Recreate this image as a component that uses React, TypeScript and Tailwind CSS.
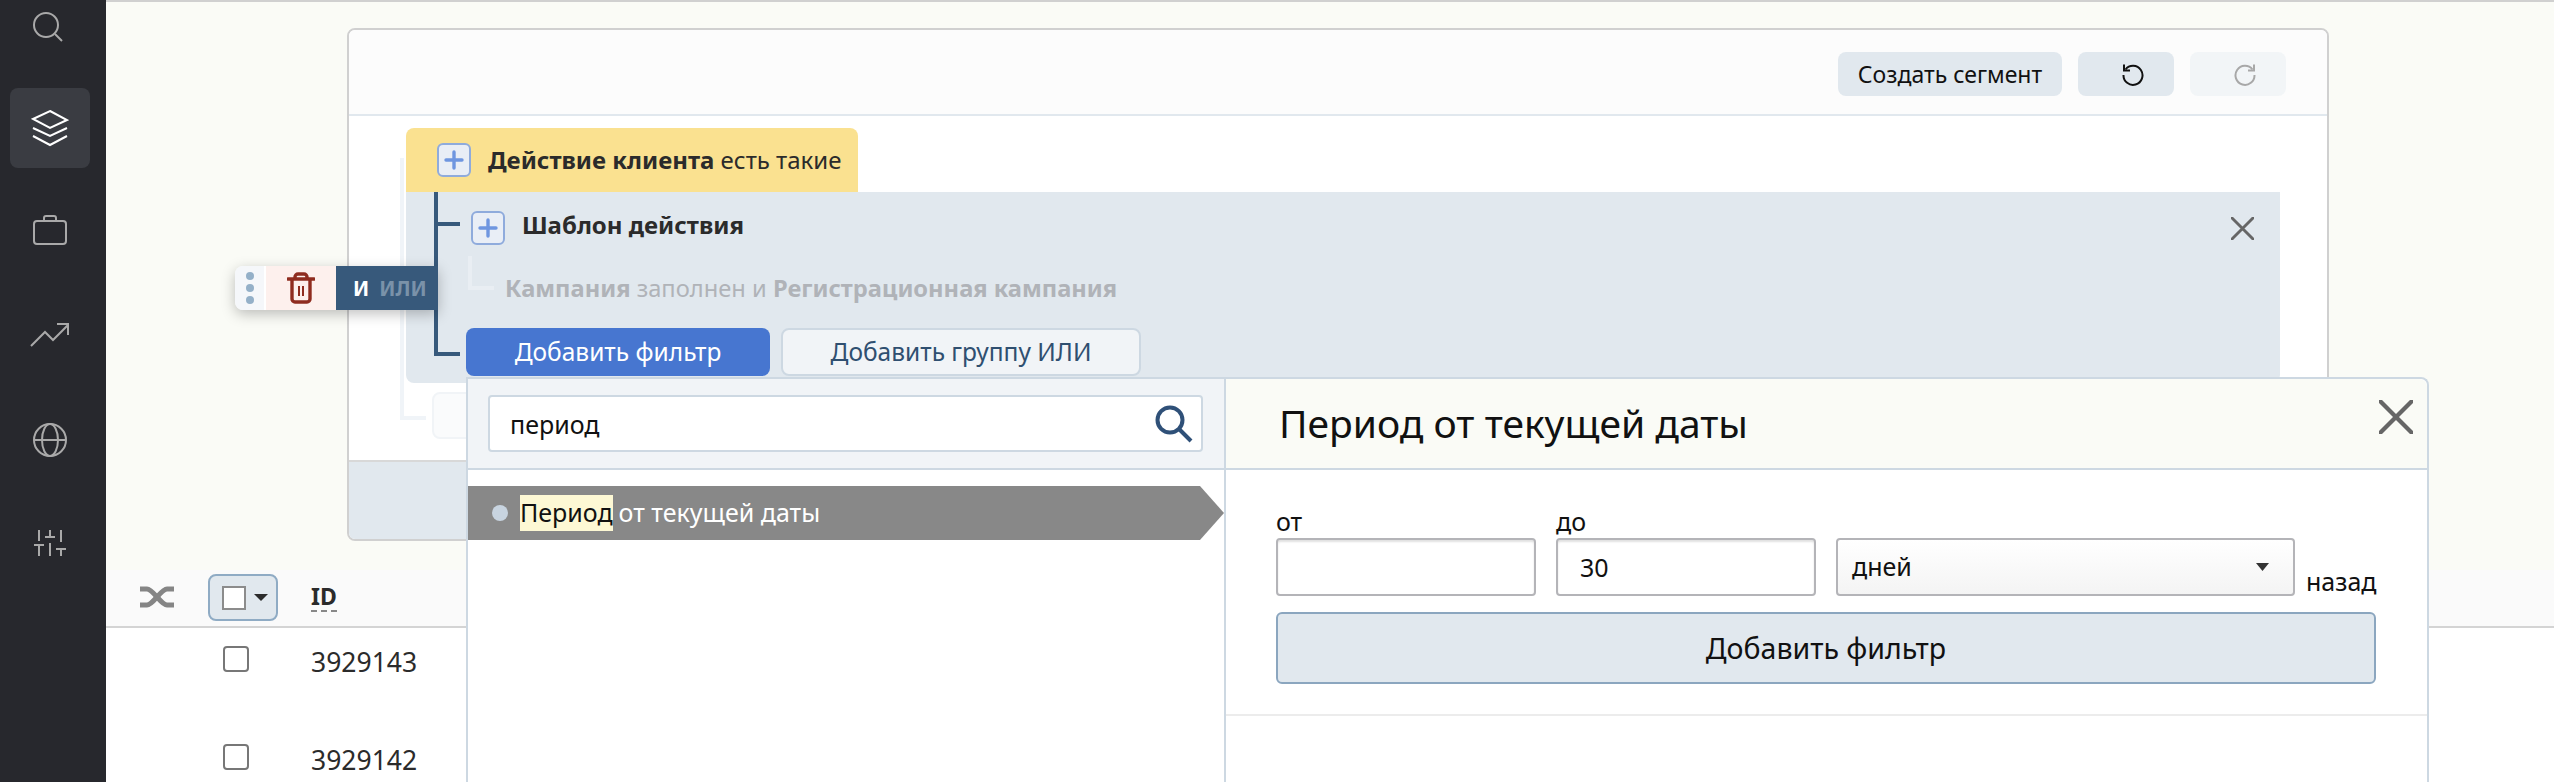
import React from 'react';

const font = { fontFamily: '"Noto Sans", "Open Sans", sans-serif' };

const PlusBox = () => (
  <div className="flex h-[34px] w-[34px] shrink-0 items-center justify-center rounded-[6px] border-2 border-[#8fabdc] bg-[#e9eef6]">
    <svg width="20" height="20" viewBox="0 0 20 20">
      <path d="M10 2v16M2 10h16" stroke="#6f96e0" strokeWidth="3.4" strokeLinecap="round" />
    </svg>
  </div>
);

const CloseIcon = ({ size, color, stroke }: { size: number; color: string; stroke: number }) => (
  <svg width={size} height={size} viewBox="0 0 24 24">
    <path d="M1 1l22 22M23 1L1 23" stroke={color} strokeWidth={stroke} strokeLinecap="round" />
  </svg>
);

// Left navigation rail
const Sidebar = () => (
  <aside className="flex h-full w-[106px] shrink-0 flex-col items-center bg-[#27282d] pr-[6px]">
    <div className="mt-[8px] flex h-[38px] w-[80px] items-center justify-center pr-[4px]">
      <svg width="30" height="30" viewBox="0 0 30 30" fill="none" stroke="#a9a9a9" strokeWidth="2">
        <circle cx="13" cy="13" r="12" />
        <path d="M22 22l7 7" />
      </svg>
    </div>
    <div className="mt-[42px] flex h-[80px] w-[80px] items-center justify-center rounded-[8px] bg-[#3a3c42]">
      <svg width="38" height="38" viewBox="0 0 38 38" fill="none" stroke="#fff" strokeWidth="2">
        <path d="M19 2l17 9-17 8-17-9z" />
        <path d="M2 19l17 8 17-8" />
        <path d="M2 27l17 9 17-9" />
      </svg>
    </div>
    <div className="mt-[46px] flex h-[32px] w-[80px] items-center justify-center">
      <svg width="34" height="30" viewBox="0 0 34 30" fill="none" stroke="#a9a9a9" strokeWidth="2">
        <rect x="1" y="6" width="32" height="23" rx="3" />
        <path d="M11 6V3a2 2 0 0 1 2-2h8a2 2 0 0 1 2 2v3" />
      </svg>
    </div>
    <div className="mt-[77px] flex h-[24px] w-[80px] items-center justify-center">
      <svg width="40" height="24" viewBox="0 0 40 24" fill="none" stroke="#a9a9a9" strokeWidth="2">
        <path d="M1 23l14-14 8 8L38 2" />
        <path d="M27 1h11v11" />
      </svg>
    </div>
    <div className="mt-[76px] flex h-[34px] w-[80px] items-center justify-center">
      <svg width="34" height="34" viewBox="0 0 34 34" fill="none" stroke="#a9a9a9" strokeWidth="2">
        <circle cx="17" cy="17" r="16" />
        <ellipse cx="17" cy="17" rx="8" ry="16" />
        <path d="M1 17h32" />
      </svg>
    </div>
    <div className="mt-[72px] flex h-[28px] w-[80px] items-center justify-center">
      <svg width="34" height="28" viewBox="0 0 34 28" fill="none" stroke="#a9a9a9" strokeWidth="2">
        <path d="M6 1v11M1 16h10M6 16v11" />
        <path d="M17 1v8M12 8h10M17 14v13" />
        <path d="M28 1v12M23 20h10M28 20v7" />
      </svg>
    </div>
  </aside>
);

// Card with the condition tree
const SegmentCard = () => (
  <div className="ml-[241px] mt-[26px] flex h-[513px] w-[1982px] flex-col overflow-hidden rounded-[8px] border-2 border-[#d0d0d0] bg-white">
    <div className="flex h-[86px] shrink-0 items-start justify-end gap-[16px] border-b-2 border-[#e1e8ee] bg-[#fcfcfc] pr-[41px] pt-[22px]">
      <div className="flex h-[44px] w-[224px] items-center justify-center rounded-[8px] bg-[#e1e8ee] text-[23px] text-[#111]">
        Создать сегмент
      </div>
      <div className="flex h-[44px] w-[96px] items-center justify-center rounded-[8px] bg-[#e1e8ee] pl-[14px]">
        <svg width="24" height="24" viewBox="0 0 24 24" fill="none" stroke="#111" strokeWidth="2">
          <path d="M4.5 7.5A9.5 9.5 0 1 1 2.5 13" />
          <path d="M3 2.5v6h6" />
        </svg>
      </div>
      <div className="flex h-[44px] w-[96px] items-center justify-center rounded-[8px] bg-[#f2f5f7] pl-[14px]">
        <svg width="24" height="24" viewBox="0 0 24 24" fill="none" stroke="#a8a8a8" strokeWidth="2">
          <path d="M19.5 7.5A9.5 9.5 0 1 0 21.5 13" />
          <path d="M21 2.5v6h-6" />
        </svg>
      </div>
    </div>

    <div className="relative flex-1 pl-[57px] pt-[12px]">
      <div className="absolute left-[51px] top-[42px] h-[262px] w-[26px] border-b-4 border-l-4 border-[#f0f4f8]" />
      <div className="absolute left-[83px] top-[276px] h-[47px] w-[60px] rounded-[8px] border-2 border-[#f1f4f7] bg-[#fafbfc]" />

      <div className="relative flex h-[64px] w-[452px] items-center gap-[17px] rounded-t-[8px] bg-[#fae190] pl-[31px] text-[24px] text-[#2b2b2b]">
        <PlusBox />
        <span className="whitespace-nowrap">
          <b>Действие клиента</b> есть такие
        </span>
      </div>

      <div className="relative h-[191px] w-[1874px] rounded-b-[8px] bg-[#e1e8ee]">
        <div className="absolute left-[28px] top-0 h-[164px] w-[4px] bg-[#37597b]" />
        <div className="absolute left-[28px] top-[30px] h-[4px] w-[26px] bg-[#37597b]" />
        <div className="absolute left-[28px] top-[160px] h-[4px] w-[26px] bg-[#37597b]" />

        <div className="flex h-[53px] items-start gap-[17px] pl-[65px] pt-[19px] text-[24px] leading-[28px] text-[#2b2b2b]">
          <PlusBox />
          <b>Шаблон действия</b>
        </div>
        <div className="absolute right-[26px] top-[25px]">
          <CloseIcon size={23} color="#666" stroke={3} />
        </div>

        <div className="relative ml-[62px] mt-[11px] h-[34px] w-[26px] border-b-4 border-l-4 border-[#e9eef3]">
          <span className="absolute left-[33px] top-[14px] whitespace-nowrap text-[23.7px] leading-[36px] text-[#b0b3b8]">
            <b>Кампания</b> заполнен и <b>Регистрационная кампания</b>
          </span>
        </div>

        <div className="ml-[60px] mt-[38px] flex gap-[11px]">
          <div className="flex h-[48px] w-[304px] items-center justify-center rounded-[8px] bg-[#4776d0] text-[24.5px] text-white">
            Добавить фильтр
          </div>
          <div className="flex h-[48px] w-[360px] items-center justify-center rounded-[8px] border-2 border-[#cdd8e2] bg-[#f1f4f7] text-[24.5px] text-[#2f4f70]">
            Добавить группу ИЛИ
          </div>
        </div>
      </div>
    </div>

    <div className="h-[79px] shrink-0 border-t-2 border-[#d8d8d8] bg-[#e1e8ee]" />
  </div>
);

// Floating AND/OR toolbar on the tree branch
const OperatorToolbar = () => (
  <div className="absolute left-[129px] top-[264px] flex h-[44px] w-[203px] overflow-hidden rounded-l-[8px] shadow-[0_4px_14px_rgba(0,0,0,0.25)]">
    <div className="flex w-[29px] flex-col items-center justify-center gap-[4px] bg-[#f5f7fa] pl-[1px]">
      <i className="h-[8px] w-[8px] rounded-full bg-[#94b0c8]" />
      <i className="h-[8px] w-[8px] rounded-full bg-[#94b0c8]" />
      <i className="h-[8px] w-[8px] rounded-full bg-[#94b0c8]" />
    </div>
    <div className="flex w-[72px] items-center justify-center border-l-2 border-white bg-[#fdf0ed]">
      <svg width="28" height="32" viewBox="0 0 28 32" fill="none" stroke="#8f2c1f" strokeWidth="3.4">
        <path d="M1 7h26" strokeLinecap="round" />
        <path d="M8 6V5a3 3 0 0 1 3-3h6a3 3 0 0 1 3 3v1" />
        <path d="M5 7v20a3 3 0 0 0 3 3h12a3 3 0 0 0 3-3V7" />
        <path d="M12 14v10M16 14v10" strokeWidth="2" />
      </svg>
    </div>
    <div className="flex flex-1 items-center gap-[10px] bg-[#37597b] pl-[17px] text-[20.5px] font-bold">
      <span className="text-white">И</span>
      <span className="text-[#7a92a9]">ИЛИ</span>
    </div>
  </div>
);

// Columns behind the popup
const ResultsTable = () => (
  <div className="mt-[29px]">
    <div className="flex h-[58px] items-start border-b-2 border-[#d4d4d4] bg-[#fafafa] pl-[34px] pt-[4px]">
      <svg className="mt-[12px]" width="34" height="22" viewBox="0 0 34 22" fill="none" stroke="#858585" strokeWidth="5">
        <path d="M0 3h7c6 0 14 16 20 16h7" />
        <path d="M0 19h7c6 0 14-16 20-16h7" />
      </svg>
      <div className="ml-[34px] flex h-[47px] w-[70px] items-center gap-[8px] rounded-[8px] border-2 border-[#8fabc4] bg-[#e1e8ee] pl-[12px]">
        <div className="h-[24px] w-[24px] border-2 border-[#8c8c8c] bg-white" />
        <svg width="14" height="7" viewBox="0 0 14 7">
          <path d="M0 0h14L7 7z" fill="#2b2b2b" />
        </svg>
      </div>
      <b className="ml-[33px] mt-[8px] border-b-2 border-dashed border-[#888] text-[23px] leading-[28px] text-[#2b2b2b]">
        ID
      </b>
    </div>
    {['3929143', '3929142'].map((id) => (
      <div key={id} className="flex h-[98px] items-start bg-white pl-[117px] pt-[18px]">
        <div className="h-[26px] w-[26px] rounded-[4px] border-2 border-[#777] bg-white" />
        <span className="-mt-[1px] ml-[62px] text-[26.5px] leading-[34px] text-[#2b2b2b]">{id}</span>
      </div>
    ))}
  </div>
);

// Filter picker that opens under the "add filter" button
const FilterPopup = () => (
  <div className="absolute bottom-0 left-[360px] top-[375px] flex w-[1962px] text-[#111]">
    <div className="w-[758px] shrink-0 border-l-2 border-t-2 border-[#cdd8e2] bg-white">
      <div className="h-[91px] border-b-2 border-[#cdd8e2] bg-[#f1f4f7] pl-[20px] pt-[16px]">
        <div className="flex h-[57px] w-[715px] items-center justify-between rounded-[4px] border-2 border-[#cdd8e2] bg-white pl-[20px] pr-[8px] text-[25px]">
          <span className="pt-[3px]">период</span>
          <svg width="38" height="38" viewBox="0 0 38 38" fill="none" stroke="#2f5078" strokeWidth="4">
            <circle cx="15" cy="15" r="12.5" />
            <path d="M24 24l12 12" />
          </svg>
        </div>
      </div>
      <div className="mt-[16px] flex h-[54px] items-center bg-[#888] pl-[24px] text-[25px] text-white [clip-path:polygon(0_0,calc(100%-24px)_0,100%_50%,calc(100%-24px)_100%,0_100%)]">
        <i className="h-[16px] w-[16px] rounded-full bg-[#c8d4e0]" />
        <span className="ml-[12px] flex h-[36px] items-center bg-[#fdf8d4] text-[#111]">Период</span>
        <span className="ml-[6px]">от текущей даты</span>
      </div>
    </div>

    <div className="flex-1 rounded-tr-[8px] border-x-2 border-t-2 border-[#cdd8e2] bg-white">
      <div className="flex h-[91px] items-center justify-between rounded-tr-[8px] border-b-2 border-[#cdd8e2] bg-[#fafbf6] pl-[53px] pr-[14px]">
        <span className="text-[39px]">Период от текущей даты</span>
        <div className="-mt-[13px]">
          <CloseIcon size={34} color="#666" stroke={3} />
        </div>
      </div>
      <div className="h-[246px] border-b-2 border-[#ececec] px-[50px] pt-[35px]">
        <div className="flex items-end gap-[20px]">
          <label className="flex w-[260px] flex-col text-[25px]">
            <span className="mb-[1px] leading-[32px]">от</span>
            <input
              readOnly
              className="h-[58px] rounded-[4px] border-2 border-[#b4b4b8] bg-white pl-[22px] shadow-[inset_0_2px_2px_rgba(0,0,0,0.12)] outline-none"
            />
          </label>
          <label className="flex w-[260px] flex-col text-[25px]">
            <span className="mb-[1px] leading-[32px]">до</span>
            <input
              readOnly
              defaultValue="30"
              className="h-[58px] rounded-[4px] border-2 border-[#b4b4b8] bg-white pl-[22px] shadow-[inset_0_2px_2px_rgba(0,0,0,0.12)] outline-none"
            />
          </label>
          <div className="flex h-[58px] w-[459px] items-center justify-between rounded-[4px] border-2 border-[#b4b4b8] bg-gradient-to-b from-white to-[#f4f4f4] pl-[14px] pr-[24px] text-[25px]">
            <span>дней</span>
            <svg width="13" height="8" viewBox="0 0 13 8">
              <path d="M0 0h13L6.5 8z" fill="#333" />
            </svg>
          </div>
          <span className="-ml-[9px] text-[25px] leading-[30px]">назад</span>
        </div>
        <div className="mt-[16px] flex h-[72px] w-[1100px] items-center justify-center rounded-[6px] border-2 border-[#8ba6bf] bg-[#e1e8ee] text-[28.5px]">
          Добавить фильтр
        </div>
      </div>
    </div>
  </div>
);

export default function App() {
  return (
    <div className="flex h-[782px] w-[2554px] overflow-hidden" style={font}>
      <Sidebar />
      <main className="relative flex-1 border-t-2 border-[#d0d0d0] bg-[#fafbf6]">
        <SegmentCard />
        <ResultsTable />
        <OperatorToolbar />
        <FilterPopup />
      </main>
    </div>
  );
}
